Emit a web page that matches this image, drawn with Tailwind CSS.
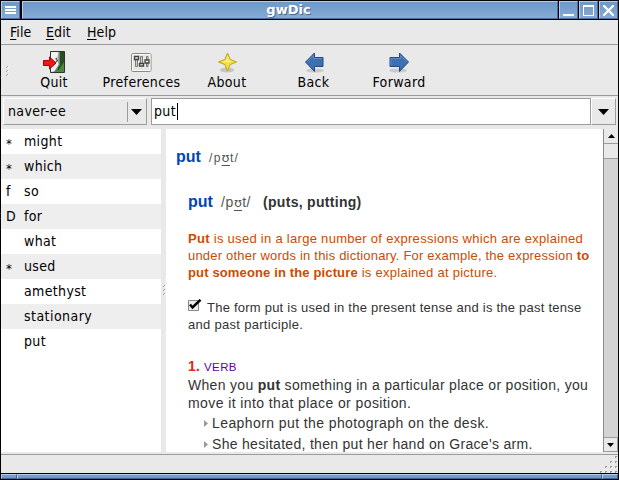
<!DOCTYPE html>
<html lang="en"><head><meta charset="utf-8"><title>gwDic</title>
<script src="https://cdn.jsdelivr.net/npm/@tailwindcss/browser@4"></script></head>
<body class="w-[619px] h-[480px] overflow-hidden bg-black">
<div class="w-[619px] h-[480px] flex flex-col bg-[#e9e9e9] border-x border-black text-black font-['DejaVu_Sans_Condensed','DejaVu_Sans',sans-serif] text-[14px] leading-[18px] tracking-[0.35px] whitespace-nowrap">
  <header class="h-5 shrink-0 flex gap-px border-y border-black bg-black">
    <div class="w-[19px] mr-px flex items-center justify-center bg-linear-to-b from-[#6d98c8] to-[#86abd5] border border-t-[#b3cdea] border-l-[#b3cdea] border-b-[#4a6d9e] border-r-[#4a6d9e]">
      <svg width="11" height="8" shape-rendering="crispEdges"><path d="M0 0h11v2H0zM0 3h11v2H0zM0 6h11v2H0z" fill="#fff"/></svg></div>
    <h1 class="flex-1 text-center bg-linear-to-b from-[#6d98c8] to-[#86abd5] border border-t-[#b3cdea] border-l-[#b3cdea] border-b-[#4a6d9e] border-r-[#4a6d9e] font-['DejaVu_Sans',sans-serif] font-bold text-[13px] leading-[15px] text-white tracking-[0px] pl-[4px] [text-shadow:1px_1px_0_#4d6a8e]"><span class="inline-block mr-[7px]">gwDic</span></h1>
    <div class="w-[19px] pb-px flex items-end justify-center bg-linear-to-b from-[#6d98c8] to-[#86abd5] border border-t-[#b3cdea] border-l-[#b3cdea] border-b-[#4a6d9e] border-r-[#4a6d9e]"><svg width="11" height="3" shape-rendering="crispEdges"><path d="M0 0h11v2H0z" fill="#fff"/></svg></div>
    <div class="w-[19px] pt-px flex items-center justify-center bg-linear-to-b from-[#6d98c8] to-[#86abd5] border border-t-[#b3cdea] border-l-[#b3cdea] border-b-[#4a6d9e] border-r-[#4a6d9e]"><svg width="11" height="11" shape-rendering="crispEdges"><path d="M0 0h11v11H0zM1 2v8h9V2z" fill="#fff" fill-rule="evenodd"/></svg></div>
    <div class="w-[19px] pt-px flex items-center justify-center bg-linear-to-b from-[#6d98c8] to-[#86abd5] border border-t-[#b3cdea] border-l-[#b3cdea] border-b-[#4a6d9e] border-r-[#4a6d9e]"><svg width="11" height="11"><path d="M1 1l9 9M10 1l-9 9" stroke="#fff" stroke-width="2.2" stroke-linecap="square"/></svg></div>
  </header>
  <nav class="h-[25px] shrink-0 flex pl-[9px] pt-[3px] border-b border-[#9c9c9c] tracking-[0.1px]">
    <span class="w-[36px]"><u class="underline-offset-2">F</u>ile</span><span class="w-[41px]"><u class="underline-offset-2">E</u>dit</span><span><u class="underline-offset-2">H</u>elp</span>
  </nav>
  <div class="h-[51px] shrink-0 flex border-b border-[#9c9c9c]">
    <svg class="mt-[21px] ml-[5px]" width="3" height="11" shape-rendering="crispEdges"><path d="M1 0h1v1H1zM0 1h1v1H0zM1 4h1v1H1zM0 5h1v1H0zM1 8h1v1H1zM0 9h1v1H0z" fill="#999"/><path d="M1 1h2v1H1zM1 5h2v1H1zM1 9h2v1H1z" fill="#fff"/></svg>
    <div class="w-[90px] flex flex-col items-center pt-[5px]"><svg width="24" height="24" viewBox="0 0 24 24"><path d="M8.500 1.500h14v21h-14z" fill="#4b8a3c" stroke="#30352c"/><path d="M16 2h6v10l-6 9z" fill="#183c18" opacity=".75"/><path d="M9 2h8.500v13L13 21 9 22z" fill="#c9cbc7"/><path d="M9 2l8 0-2 5-3 2 5 3v3l-4 6-4 1z" fill="#f2f2f0"/><path d="M17 2v13l-4 6" fill="none" stroke="#777" stroke-width="1"/><path d="M14 8l1.500 3-2 1" fill="none" stroke="#333"/><path d="M1.500 10.500h6v-3.500l6.500 6-6.500 6v-3.500h-6z" fill="#f21616" stroke="#a60000"/></svg><span class="mt-[-1px]">Quit</span></div>
    <div class="w-[86px] flex flex-col items-center pt-[5px] pr-[1px]"><svg width="24" height="24" viewBox="0 0 24 24"><rect x="1.500" y="3.500" width="19.500" height="18" rx="1.500" fill="#e6e6e3" stroke="#888a85"/><rect x="2.500" y="4.500" width="17.500" height="16" fill="none" stroke="#fafafa"/><g transform="translate(-1 0)"><path d="M6.500 9h2v7.500h-2zM11.500 6.500h2V15h-2zM17.500 6.500h1.500v3h-1.500zM17.500 13h1.500v3.500h-1.500z" fill="#cfcfcc" stroke="#62645f" stroke-width=".8"/><path d="M5.500 6.500h4v3h-4zM10.500 13.500h4v2.500h-4zM16 10h4v3h-4z" fill="#eee" stroke="#42443f" stroke-width="1.300"/></g></svg><span class="mt-[-1px]">Preferences</span></div>
    <div class="w-[86px] flex flex-col items-center pt-[5px] pr-[2px]"><svg width="24" height="24" viewBox="0 0 24 24"><ellipse cx="12" cy="20" rx="7" ry="2.500" fill="#000" opacity=".16"/><path d="M12.500 3.500l2.600 6.400 6.400 2.600-6.400 2.600-2.600 6.400-2.600-6.400-6.400-2.600 6.400-2.600z" fill="#f2df49" stroke="#c2a40c" stroke-linejoin="round" transform="translate(0 -.5)"/><path d="M12.500 6l1.500 4.500 4 1.500h-11l4-1.500z" fill="#fff29b" opacity=".8"/></svg><span class="mt-[-1px]">About</span></div>
    <div class="w-[86px] flex flex-col items-center pt-[5px] pr-px"><svg width="24" height="24" viewBox="0 0 24 24"><ellipse cx="13" cy="20.500" rx="9" ry="2" fill="#000" opacity=".13"/><path d="M3.500 12l9-9v4.500h8.500v9h-8.500v5z" fill="#3c70b0" stroke="#204a87" stroke-linejoin="round"/><path d="M5 12l6.500-6.500v3h8.500" fill="none" stroke="#5c8ac2"/></svg><span class="mt-[-1px]">Back</span></div>
    <div class="w-[86px] flex flex-col items-center pt-[5px] pr-[2px]"><svg width="24" height="24" viewBox="0 0 24 24"><ellipse cx="11" cy="20.500" rx="9" ry="2" fill="#000" opacity=".13"/><path d="M21.500 12l-9-9v4.500H3v9h9.500v5z" fill="#3c70b0" stroke="#204a87" stroke-linejoin="round"/><path d="M4 15.500v-7h9.500v-3L20 12" fill="none" stroke="#5c8ac2"/></svg><span class="mt-[-1px]">Forward</span></div>
  </div>
  <div class="h-[33px] shrink-0 flex pt-[2px] pl-[2px] pr-[2px]">
    <div class="w-[144px] h-[27px] flex items-center border border-t-white border-l-white border-b-[#9c9c9c] border-r-[#9c9c9c] pl-[4px]"><span class="w-[119px] pb-px">naver-ee</span><span class="h-[20px] w-px bg-[#9c9c9c] mr-[3px]"></span><svg width="12" height="6"><path d="M0 0h11L5.500 6z"/></svg></div>
    <div class="ml-[4px] w-[440px] h-[27px] flex items-center bg-white border border-[#9c9c9c] pl-[2px]"><span class="pb-px">put</span><span class="w-px h-[17px] bg-black ml-px"></span></div>
    <div class="w-[25px] h-[27px] flex items-center justify-center border border-t-white border-l-white border-b-[#9c9c9c] border-r-[#9c9c9c]"><svg width="11" height="6"><path d="M0 0h11L5.500 6z"/></svg></div>
  </div>
  <main class="h-[323px] shrink-0 flex">
    <ul class="w-[160px] bg-white leading-[25px]">
      <li class="h-[25px] flex pl-[5px]"><span class="w-[18px] text-[13px] pt-[2px]">*</span>might</li>
      <li class="h-[25px] flex pl-[5px] bg-[#eee]"><span class="w-[18px] text-[13px] pt-[2px]">*</span>which</li>
      <li class="h-[25px] flex pl-[5px]"><span class="w-[18px]">f</span>so</li>
      <li class="h-[25px] flex pl-[5px] bg-[#eee]"><span class="w-[18px]">D</span>for</li>
      <li class="h-[25px] flex pl-[5px]"><span class="w-[18px]"></span>what</li>
      <li class="h-[25px] flex pl-[5px] bg-[#eee]"><span class="w-[18px] text-[13px] pt-[2px]">*</span>used</li>
      <li class="h-[25px] flex pl-[5px]"><span class="w-[18px]"></span>amethyst</li>
      <li class="h-[25px] flex pl-[5px] bg-[#eee]"><span class="w-[18px]"></span><span class="tracking-[0.45px]">stationary</span></li>
      <li class="h-[25px] flex pl-[5px]"><span class="w-[18px]"></span>put</li>
    </ul>
    <div class="w-[5px] flex items-center pl-[2px]"><svg width="3" height="11" shape-rendering="crispEdges"><path d="M1 0h1v1H1zM0 1h1v1H0zM1 4h1v1H1zM0 5h1v1H0zM1 8h1v1H1zM0 9h1v1H0z" fill="#999"/><path d="M1 1h2v1H1zM1 5h2v1H1zM1 9h2v1H1z" fill="#fff"/></svg></div>
    <article class="w-[437px] bg-white overflow-hidden pl-[22px] font-['Liberation_Sans',Arial,sans-serif] text-[#333]">
      <div class="-ml-3 mt-[18px] h-5 leading-5 flex items-baseline"><b class="w-[33px] text-[16px] text-[#0046b4] tracking-[0px]">put</b><span class="text-[12px] text-[#555] tracking-[1.3px]">/p<span class="underline underline-offset-[3px] text-[13px] tracking-[0.3px] font-['DejaVu_Sans',sans-serif]">ʊ</span>t/</span></div>
      <div class="mt-[25px] h-5 leading-5 flex items-baseline"><b class="w-[33px] text-[16px] text-[#0046b4] tracking-[0px]">put</b><span class="w-[42px] text-[14px] text-[#555] tracking-[0.6px]">/p<span class="underline underline-offset-[3px] text-[13px] tracking-[0.2px] font-['DejaVu_Sans',sans-serif]">ʊ</span>t/</span><b class="text-[14px] tracking-[0.3px]">(puts, putting)</b></div>
      <p class="mt-[18px] text-[13px] leading-[17px] text-[#cc4b00] tracking-[0.29px]"><b>Put</b> is used in a large number of expressions which are explained<br><span class="tracking-[0.2px]">under other words in this dictionary. For example, the expression <b>to</b></span><br><b class="tracking-[0.14px]">put someone in the picture</b><span class="tracking-[0.27px]"> is explained at picture.</span></p>
      <p class="mt-[18px] text-[13px] leading-[17px] tracking-[0.23px]"><svg class="inline-block align-[0px] mr-[5px]" width="14" height="13" viewBox="0 0 14 13"><path d="M.5 1.500h10v10H.5z" fill="#eee" stroke="#888"/><path d="M2 5.500l2.500 3L12.500.8" fill="none" stroke="#000" stroke-width="2.500"/></svg>The form put is used in the present tense and is the past tense<br><span class="tracking-[0.3px]">and past participle.</span></p>
      <div class="mt-[24px] h-[18px] leading-[18px] flex items-baseline"><b class="w-4 text-[14px] text-[#e6280f] tracking-[0.3px]">1.</b><span class="text-[11.500px] text-[#6000a0] tracking-[0.4px]">VERB</span></div>
      <p class="mt-px text-[14px] leading-[18px] tracking-[0.31px]">When you <b>put</b> something in a particular place or position, you<br><span class="tracking-[0.41px]">move it into that place or position.</span></p>
      <ul class="pl-[16px] pt-px text-[14px] tracking-[0.41px] leading-[21px]"><li class="flex items-center"><svg width="8" height="7"><path d="M0 0l4 3.500L0 7z" fill="#999"/></svg>Leaphorn put the photograph on the desk.</li><li class="flex items-center tracking-[0.3px]"><svg width="8" height="7"><path d="M0 0l4 3.500L0 7z" fill="#999"/></svg>She hesitated, then put her hand on Grace's arm.</li></ul>
    </article>
    <div class="w-[15px] flex flex-col bg-[#d3d3d3] border-l border-[#8c8c8c]">
      <div class="h-[15px] flex items-center justify-center bg-[#e9e9e9] border-b border-[#9c9c9c]"><svg width="7" height="4"><path d="M3.500 0L7 4H0z"/></svg></div>
      <div class="h-[15px] bg-[#e9e9e9] border-b border-[#9c9c9c]"></div>
      <div class="flex-1"></div>
      <div class="h-[15px] flex items-center justify-center bg-[#e9e9e9] border border-l-0 border-[#9c9c9c]"><svg width="7" height="4"><path d="M3.500 4L7 0H0z"/></svg></div>
    </div>
  </main>
  <div class="h-[19px] mt-[2px] shrink-0 flex items-end justify-end border-t border-[#9c9c9c]"><svg width="18" height="18" shape-rendering="crispEdges"><path d="M15 1h2v1h-1v1h-1zM10 6h2v1h-1v1h-1zM15 6h2v1h-1v1h-1zM5 11h2v1H6v1H5zM10 11h2v1h-1v1h-1zM15 11h2v1h-1v1h-1zM0 16h2v1H1v1H0zM5 16h2v1H6v1H5zM10 16h2v1h-1v1h-1zM15 16h2v1h-1v1h-1z" fill="#999"/></svg></div>
  <footer class="h-[7px] shrink-0 border-y border-black flex"><div class="w-[16px] bg-[#709cce] border border-t-[#b3cdea] border-l-[#b3cdea] border-r-[#41638f] border-b-[#41638f]"></div><div class="flex-1 bg-[#709cce] border border-t-[#b3cdea] border-l-[#b3cdea] border-r-[#41638f] border-b-[#41638f]"></div><div class="w-[16px] bg-[#709cce] border border-t-[#b3cdea] border-l-[#b3cdea] border-r-[#41638f] border-b-[#41638f]"></div></footer>
</div></body></html>
